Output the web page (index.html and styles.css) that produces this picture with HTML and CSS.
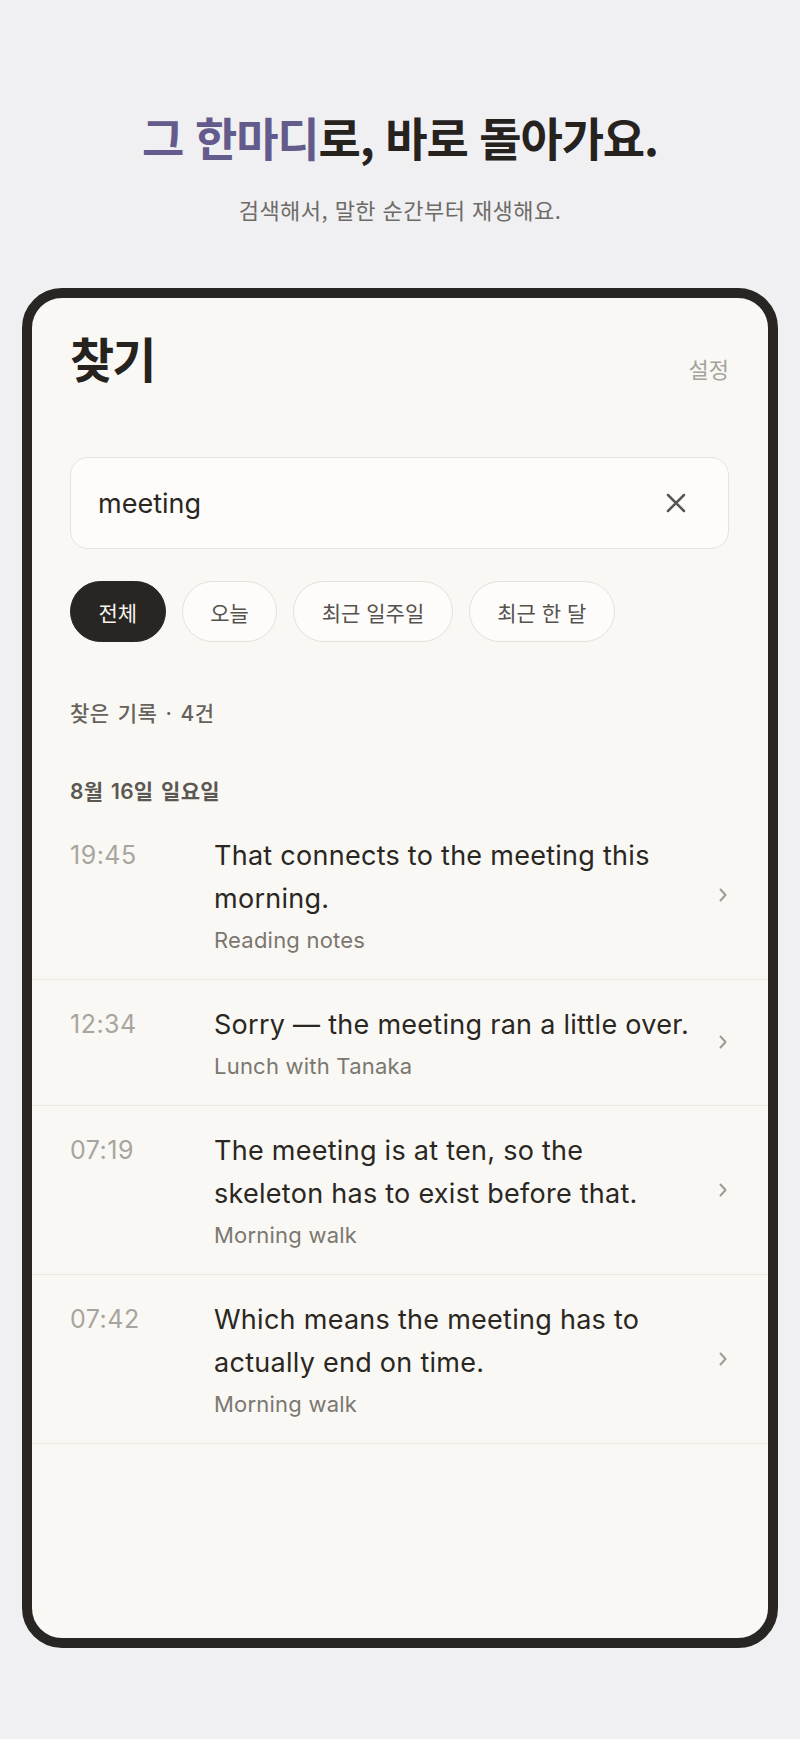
FILE: index.html
```html
<!DOCTYPE html>
<html lang="ko">
<head>
<meta charset="utf-8">
<title>찾기</title>
<link rel="stylesheet" href="styles.css">
</head>
<body>
  <section class="hero">
    <h1 class="hero-title"><span class="accent">그 한마디</span>로, 바로 돌아가요.</h1>
    <p class="hero-sub">검색해서, 말한 순간부터 재생해요.</p>
  </section>

  <div class="device">
    <div class="screen">
      <header class="top">
        <h2 class="top-title">찾기</h2>
        <span class="top-link">설정</span>
      </header>

      <div class="search">
        <span class="query">meeting</span>
        <svg class="clear" width="20" height="20" viewBox="0 0 20 20" aria-hidden="true">
          <path d="M2 2 L18 18 M18 2 L2 18" fill="none" stroke="currentColor" stroke-width="2.5" stroke-linecap="round"/>
        </svg>
      </div>

      <div class="chips">
        <span class="chip chip-active">전체</span>
        <span class="chip">오늘</span>
        <span class="chip">최근 일주일</span>
        <span class="chip">최근 한 달</span>
      </div>

      <div class="count">찾은 기록 · 4건</div>
      <div class="date">8월 16일 일요일</div>

      <ul class="results">
        <li class="row">
          <span class="time">19:45</span>
          <div class="body">
            <p class="line">That connects to the meeting this<br>morning.</p>
            <p class="src">Reading notes</p>
          </div>
          <svg class="chev" width="10" height="14" viewBox="0 0 10 14" aria-hidden="true"><path d="M2.5 1.5 L7.5 7 L2.5 12.5" fill="none" stroke="currentColor" stroke-width="2" stroke-linecap="round" stroke-linejoin="round"/></svg>
        </li>
        <li class="row">
          <span class="time">12:34</span>
          <div class="body">
            <p class="line">Sorry — the meeting ran a little over.</p>
            <p class="src">Lunch with Tanaka</p>
          </div>
          <svg class="chev" width="10" height="14" viewBox="0 0 10 14" aria-hidden="true"><path d="M2.5 1.5 L7.5 7 L2.5 12.5" fill="none" stroke="currentColor" stroke-width="2" stroke-linecap="round" stroke-linejoin="round"/></svg>
        </li>
        <li class="row">
          <span class="time">07:19</span>
          <div class="body">
            <p class="line">The meeting is at ten, so the<br>skeleton has to exist before that.</p>
            <p class="src">Morning walk</p>
          </div>
          <svg class="chev" width="10" height="14" viewBox="0 0 10 14" aria-hidden="true"><path d="M2.5 1.5 L7.5 7 L2.5 12.5" fill="none" stroke="currentColor" stroke-width="2" stroke-linecap="round" stroke-linejoin="round"/></svg>
        </li>
        <li class="row">
          <span class="time">07:42</span>
          <div class="body">
            <p class="line">Which means the meeting has to<br>actually end on time.</p>
            <p class="src">Morning walk</p>
          </div>
          <svg class="chev" width="10" height="14" viewBox="0 0 10 14" aria-hidden="true"><path d="M2.5 1.5 L7.5 7 L2.5 12.5" fill="none" stroke="currentColor" stroke-width="2" stroke-linecap="round" stroke-linejoin="round"/></svg>
        </li>
      </ul>
    </div>
  </div>
</body>
</html>
```

FILE: styles.css
```css
* { box-sizing: border-box; }

html, body {
  margin: 0;
  padding: 0;
}

body {
  background: #f0eff2;
  font-family: "Inter", "Noto Sans CJK KR", sans-serif;
  color: #2a2723;
  min-height: 1739px;
}

.hero {
  padding-top: 108px;
  text-align: center;
}

.hero-title {
  margin: 0;
  font-family: "Noto Sans CJK KR", sans-serif;
  font-size: 46px;
  line-height: 56px;
  font-weight: 700;
  letter-spacing: -0.025em;
  color: #26231f;
}

.accent { color: #625b8b; }

.hero-sub {
  margin: 30px 0 0;
  font-family: "Noto Sans CJK KR", sans-serif;
  font-size: 22px;
  line-height: 30px;
  letter-spacing: 0.02em;
  color: #6e6b67;
}

.device {
  margin: 64px 22px 0;
  height: 1360px;
  border: 10px solid #282522;
  border-radius: 40px;
  background: #f9f8f4;
  overflow: hidden;
}

.screen {
  display: flex;
  flex-direction: column;
}

.top {
  display: flex;
  justify-content: space-between;
  align-items: baseline;
  padding: 31px 39px 0 38px;
}

.top-title {
  margin: 0;
  font-family: "Noto Sans CJK KR", sans-serif;
  font-size: 48px;
  line-height: 57px;
  font-weight: 700;
  letter-spacing: -0.04em;
  color: #26231f;
}

.top-link {
  font-family: "Noto Sans CJK KR", sans-serif;
  font-size: 22px;
  color: #a6a39c;
}

.search {
  margin: 71px 39px 0 38px;
  height: 92px;
  border: 1.5px solid #e6e3dc;
  border-radius: 18px;
  background: #fdfcfa;
  display: flex;
  align-items: center;
  justify-content: space-between;
  padding: 0 42px 0 27px;
}

.query {
  font-size: 27px;
  color: #2a2723;
}

.clear {
  color: #5a5752;
  display: block;
}

.chips {
  display: flex;
  gap: 16px;
  margin: 32px 38px 0;
}

.chip {
  height: 61px;
  padding: 0 27.5px;
  border: 1.5px solid #e4e1da;
  border-radius: 31px;
  background: #fdfcfa;
  display: flex;
  align-items: center;
  font-family: "Noto Sans CJK KR", sans-serif;
  font-size: 21px;
  color: #55524d;
}

.chip-active {
  background: #282522;
  border-color: #282522;
  color: #f7f5f0;
}

.count {
  margin: 58px 38px 0;
  font-size: 21px;
  line-height: 28px;
  font-weight: 500;
  word-spacing: 2px;
  letter-spacing: 0.5px;
  color: #66625c;
}

.date {
  margin: 50px 38px 0;
  font-size: 21px;
  line-height: 28px;
  font-weight: 600;
  word-spacing: 2px;
  letter-spacing: 0.3px;
  color: #5b5751;
}

.results {
  list-style: none;
  margin: 5px 0 0;
  padding: 0;
}

.row {
  display: grid;
  grid-template-columns: 144px 1fr 10px;
  align-items: start;
  padding: 23px 40px 24px 38px;
  border-bottom: 1px solid #ebe8e2;
}

.time {
  font-size: 25px;
  line-height: 43px;
  letter-spacing: 0.02em;
  color: #a9a59e;
}

.body { min-width: 0; }

.line {
  margin: 0;
  font-size: 27px;
  line-height: 43px;
  letter-spacing: 0.01em;
  white-space: nowrap;
  color: #2a2723;
}

.src {
  margin: 5px 0 0;
  font-size: 22px;
  line-height: 30px;
  letter-spacing: 0.01em;
  color: #7b7770;
}

.chev {
  align-self: center;
  color: #9f9b94;
  display: block;
}
```
